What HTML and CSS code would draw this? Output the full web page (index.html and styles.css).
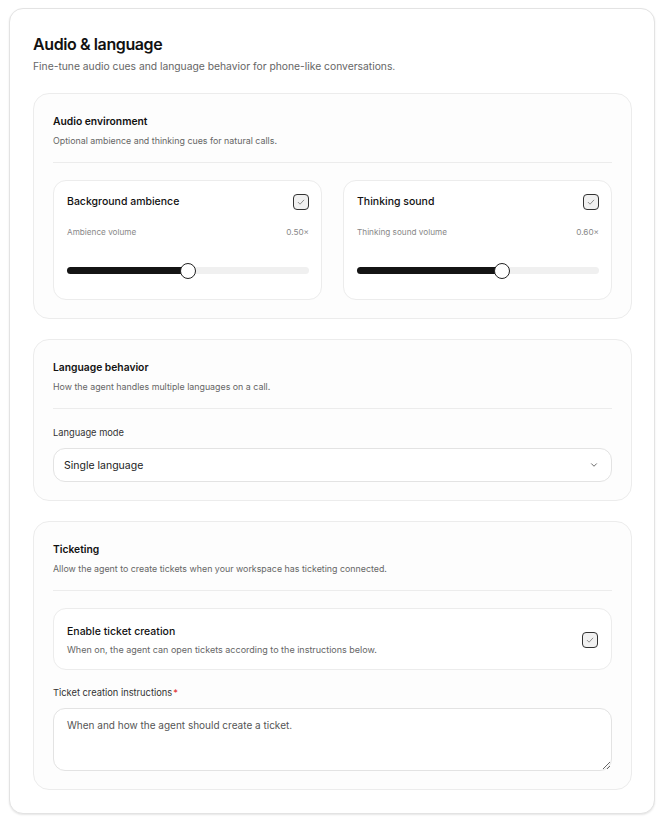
FILE: index.html
```html
<!DOCTYPE html>
<html>
<head>
<meta charset="utf-8">
<link rel="stylesheet" href="styles.css">
</head>
<body>
<div class="panel">
  <h1 class="title">Audio &amp; language</h1>
  <p class="subtitle">Fine-tune audio cues and language behavior for phone-like conversations.</p>

  <section class="section">
    <h2 class="sec-title">Audio environment</h2>
    <p class="sec-desc">Optional ambience and thinking cues for natural calls.</p>
    <div class="divider"></div>
    <div class="grid2">
      <div class="card">
        <div class="card-head">
          <span class="card-title">Background ambience</span>
          <span class="check"><svg viewBox="0 0 16 16" width="10" height="10"><path d="M3.5 8.5l3 3 6-6.5" fill="none" stroke="#777" stroke-width="1.3" stroke-linecap="round" stroke-linejoin="round"/></svg></span>
        </div>
        <div class="vol-row"><span>Ambience volume</span><span>0.50×</span></div>
        <div class="slider">
          <div class="fill" style="width:50%"></div>
          <div class="thumb" style="left:50%"></div>
        </div>
      </div>
      <div class="card">
        <div class="card-head">
          <span class="card-title">Thinking sound</span>
          <span class="check"><svg viewBox="0 0 16 16" width="10" height="10"><path d="M3.5 8.5l3 3 6-6.5" fill="none" stroke="#777" stroke-width="1.3" stroke-linecap="round" stroke-linejoin="round"/></svg></span>
        </div>
        <div class="vol-row"><span>Thinking sound volume</span><span>0.60×</span></div>
        <div class="slider">
          <div class="fill" style="width:60%"></div>
          <div class="thumb" style="left:60%"></div>
        </div>
      </div>
    </div>
  </section>

  <section class="section">
    <h2 class="sec-title">Language behavior</h2>
    <p class="sec-desc">How the agent handles multiple languages on a call.</p>
    <div class="divider"></div>
    <label class="field-label">Language mode</label>
    <div class="select">
      <span>Single language</span>
      <svg viewBox="0 0 16 16" width="10" height="10"><path d="M4 6l4 4 4-4" fill="none" stroke="#555" stroke-width="1.4" stroke-linecap="round" stroke-linejoin="round"/></svg>
    </div>
  </section>

  <section class="section">
    <h2 class="sec-title">Ticketing</h2>
    <p class="sec-desc">Allow the agent to create tickets when your workspace has ticketing connected.</p>
    <div class="divider"></div>
    <div class="toggle-card">
      <div>
        <div class="card-title">Enable ticket creation</div>
        <div class="toggle-desc">When on, the agent can open tickets according to the instructions below.</div>
      </div>
      <span class="check"><svg viewBox="0 0 16 16" width="10" height="10"><path d="M3.5 8.5l3 3 6-6.5" fill="none" stroke="#777" stroke-width="1.3" stroke-linecap="round" stroke-linejoin="round"/></svg></span>
    </div>
    <label class="field-label">Ticket creation instructions<span class="req">*</span></label>
    <textarea class="textarea" placeholder="When and how the agent should create a ticket."></textarea>
  </section>
</div>
</body>
</html>
```

FILE: styles.css
```css
* { box-sizing: border-box; }
html, body { margin: 0; padding: 0; background: #fff; }
body {
  font-family: Inter, "Noto Sans", sans-serif;
  color: #111;
  padding: 8px 4px 7px 9px;
}
.panel {
  width: 646px;
  border: 1px solid #e3e3e3;
  border-radius: 14px;
  padding: 24px 22px 23px 23px;
  box-shadow: 0 1px 2px rgba(0,0,0,0.10);
  background: #fff;
}
.title {
  margin: 0;
  font-size: 16px;
  font-weight: 600;
  letter-spacing: -0.4px;
  line-height: 22px;
}
.subtitle {
  margin: 4px 0 0;
  font-size: 10.3px;
  color: #666;
  line-height: 14px;
}
.section {
  margin-top: 20px;
  border: 1px solid #ececec;
  border-radius: 16px;
  background: #fdfdfd;
  padding: 19px 19px 18px 19px;
}
.sec-title {
  margin: 0;
  font-size: 10.3px;
  font-weight: 600;
  line-height: 16px;
}
.sec-desc {
  margin: 5px 0 0;
  font-size: 8.85px;
  color: #666;
  line-height: 13px;
}
.divider {
  height: 1px;
  background: #ececec;
  margin: 15px 0 17px;
}
.grid2 {
  display: grid;
  grid-template-columns: 1fr 1fr;
  gap: 21px;
}
.card {
  border: 1px solid #ececec;
  border-radius: 13px;
  background: #fff;
  padding: 13px 12px 25px 13px;
}
.card-head {
  display: flex;
  justify-content: space-between;
  align-items: center;
}
.card-title {
  font-size: 10.5px;
  font-weight: 500;
  line-height: 16px;
  color: #111;
}
.check {
  width: 16px;
  height: 16px;
  border: 1.3px solid #333;
  border-radius: 4px;
  background: #f1f1f1;
  display: flex;
  align-items: center;
  justify-content: center;
}
.vol-row {
  display: flex;
  justify-content: space-between;
  font-size: 8.2px;
  color: #888;
  margin-top: 16px;
  line-height: 12px;
}
.slider {
  position: relative;
  height: 7px;
  border-radius: 4px;
  background: #f0f0f0;
  margin-top: 29px;
}
.fill {
  height: 100%;
  background: #141414;
  border-radius: 4px;
}
.thumb {
  position: absolute;
  top: 50%;
  width: 16px;
  height: 16px;
  margin: -8px 0 0 -8px;
  border-radius: 50%;
  background: #fff;
  border: 1.3px solid #222;
}
.field-label {
  display: block;
  font-size: 9.3px;
  color: #333;
  line-height: 13px;
  margin-bottom: 9px;
}
.select {
  display: flex;
  justify-content: space-between;
  align-items: center;
  height: 34px;
  border: 1px solid #e3e3e3;
  border-radius: 12px;
  background: #fff;
  padding: 0 12px 0 10px;
  font-size: 10.5px;
  color: #222;
}
.toggle-card {
  display: flex;
  justify-content: space-between;
  align-items: center;
  border: 1px solid #ececec;
  border-radius: 13px;
  background: #fff;
  padding: 15px 13px 13px 13px;
  margin-bottom: 16px;
}
.toggle-desc {
  font-size: 9px;
  color: #666;
  line-height: 13px;
  margin-top: 3px;
}
.req { color: #e03030; margin-left: 1px; }
.textarea {
  display: block;
  width: 100%;
  height: 63px;
  border: 1px solid #e3e3e3;
  border-radius: 12px;
  background: #fff;
  padding: 10px 13px;
  font-family: Inter, "Noto Sans", sans-serif;
  font-size: 10px;
  color: #333;
  resize: vertical;
}
.textarea::placeholder { color: #555; }
```
